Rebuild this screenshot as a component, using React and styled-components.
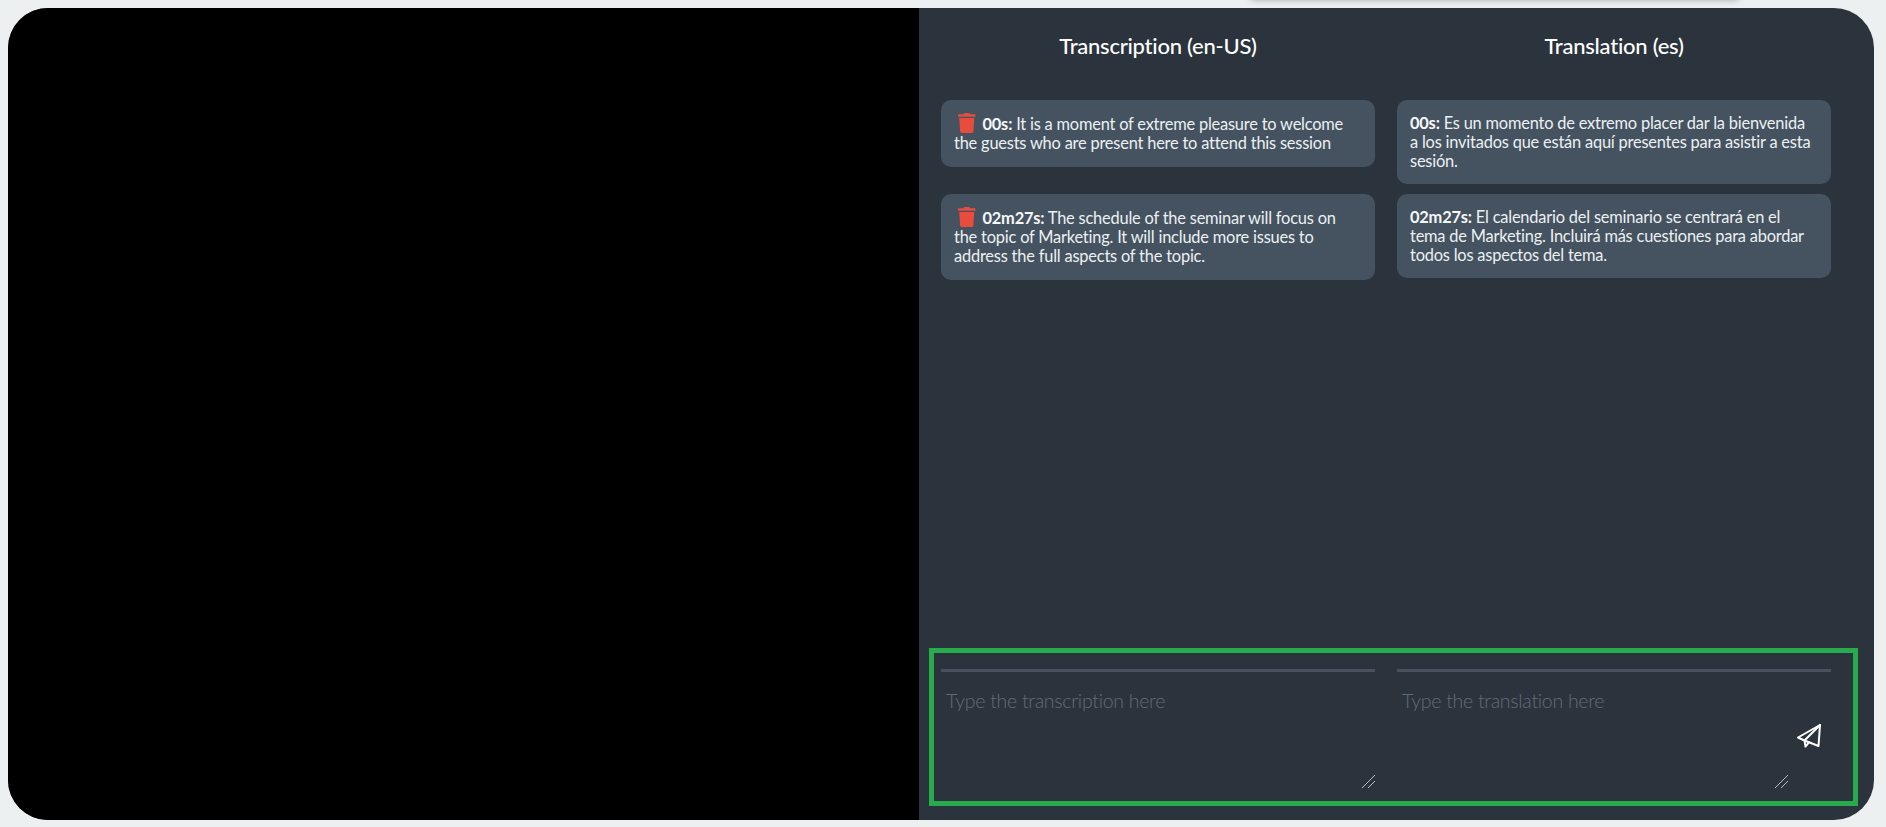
import React from 'react';
import styled, { createGlobalStyle } from 'styled-components';
import { FaTrash } from 'react-icons/fa';

const GlobalStyle = createGlobalStyle`
  html, body {
    margin: 0;
    height: 100%;
    background: #ecf0f1;
    font-family: "Lato", "Open Sans", sans-serif;
    overflow: hidden;
  }
`;

const Page = styled.div`
  position: relative;
  height: 827px;
  padding: 8px 12px 7px 8px;
  box-sizing: border-box;
`;

const TopShadow = styled.div`
  position: absolute;
  top: -10px;
  left: 1250px;
  width: 490px;
  height: 10px;
  border-radius: 6px;
  box-shadow: 0 0 6px rgba(0, 0, 0, 0.3);
`;

const Shell = styled.div`
  display: flex;
  height: 812px;
  border-radius: 40px;
  overflow: hidden;
  background: #2b343d;
`;

const VideoPane = styled.div`
  width: 911px;
  flex: none;
  background: #000;
`;

const SidePane = styled.div`
  flex: 1;
  display: flex;
  flex-direction: column;
  padding: 0 16px 14px 10px;
  min-width: 0;
`;

const Columns = styled.div`
  display: grid;
  grid-template-columns: 434px 434px;
  column-gap: 22px;
  padding-left: ${(p) => p.$inset}px;
`;

const Title = styled.h2`
  margin: 0;
  height: 92px;
  padding-top: 23px;
  box-sizing: border-box;
  font-size: 22px;
  line-height: 30px;
  font-weight: 500;
  letter-spacing: -0.25px;
  text-align: center;
  color: #fff;
`;

const Messages = styled.div`
  flex: 1;
`;

const Cards = styled.div`
  display: flex;
  flex-direction: column;
`;

const Card = styled.div`
  box-sizing: border-box;
  height: ${(p) => p.$height}px;
  margin-bottom: ${(p) => p.$gap}px;
  padding: 13px 17px 0 13px;
  border-radius: 10px;
  background: #455361;
  color: #ecf0f1;
  font-size: 16.4px;
  line-height: 19px;
  letter-spacing: -0.2px;
`;

const Stamp = styled.strong`
  font-weight: 700;
  color: #f5f7f8;
`;

const TrashIcon = styled(FaTrash)`
  width: 17.5px;
  height: 20px;
  margin: 0 7px 0 4px;
  vertical-align: -3px;
  color: #e74c3c;
`;

const Composer = styled.div`
  box-sizing: border-box;
  height: 158px;
  border: 5px solid #27ab4d;
  padding-top: 16px;
  padding-left: 7px;
`;

const InputCell = styled.div`
  display: flex;
  align-items: flex-start;
  height: 119px;
  border-top: 3px solid #48525e;
`;

const Input = styled.textarea`
  flex: 1;
  min-width: 0;
  height: 116px;
  box-sizing: border-box;
  padding: 16px 5px 0;
  border: 0;
  outline: 0;
  background: transparent;
  color: #ecf0f1;
  font-family: inherit;
  font-size: 19.5px;
  line-height: 26px;
  letter-spacing: -0.28px;
  font-weight: 300;
  resize: vertical;

  &::placeholder {
    color: #636c76;
    opacity: 1;
  }

  &::-webkit-resizer {
    background:
      linear-gradient(135deg, transparent 55%, #b9bec3 55%, #b9bec3 58.5%, transparent 58.5%) 0 0 / 15px 15px no-repeat,
      linear-gradient(135deg, transparent 75%, #b9bec3 75%, #b9bec3 78.5%, transparent 78.5%) 0 0 / 15px 15px no-repeat;
  }
`;

const SendButton = styled.button`
  flex: none;
  width: 43px;
  margin-top: 52px;
  padding: 0 0 0 9px;
  border: 0;
  background: transparent;
  display: flex;
  justify-content: flex-start;
`;

const PlaneIcon = () => (
  <svg width="24" height="24" viewBox="0 0 24 24" fill="none" stroke="#fff" strokeWidth="2" strokeLinejoin="round" strokeLinecap="round">
    <path d="M23 1 1 13.5l6.5 3 14 5.5L23 1Z" />
    <path d="M23 1 7.5 16.5l1 6 3.5-4.2" />
  </svg>
);

const transcription = [
  { time: '00s', text: 'It is a moment of extreme pleasure to welcome the guests who are present here to attend this session', height: 67, gap: 27 },
  { time: '02m27s', text: 'The schedule of the seminar will focus on the topic of Marketing. It will include more issues to address the full aspects of the topic.', height: 86, gap: 0 },
];

const translation = [
  { time: '00s', text: 'Es un momento de extremo placer dar la bienvenida a los invitados que están aquí presentes para asistir a esta sesión.', height: 84, gap: 10 },
  { time: '02m27s', text: 'El calendario del seminario se centrará en el tema de Marketing. Incluirá más cuestiones para abordar todos los aspectos del tema.', height: 84, gap: 0 },
];

export default function App() {
  return (
    <>
      <GlobalStyle />
      <Page>
        <TopShadow />
        <Shell>
          <VideoPane />
          <SidePane>
            <Messages>
              <Columns $inset={12}>
                <Title>Transcription (en-US)</Title>
                <Title>Translation (es)</Title>
                <Cards>
                  {transcription.map((m) => (
                    <Card key={m.time} $height={m.height} $gap={m.gap}>
                      <TrashIcon />
                      <Stamp>{m.time}:</Stamp> {m.text}
                    </Card>
                  ))}
                </Cards>
                <Cards>
                  {translation.map((m) => (
                    <Card key={m.time} $height={m.height} $gap={m.gap}>
                      <Stamp>{m.time}:</Stamp> {m.text}
                    </Card>
                  ))}
                </Cards>
              </Columns>
            </Messages>
            <Composer>
              <Columns $inset={0}>
                <InputCell>
                  <Input placeholder="Type the transcription here" />
                </InputCell>
                <InputCell>
                  <Input placeholder="Type the translation here" />
                  <SendButton>
                    <PlaneIcon />
                  </SendButton>
                </InputCell>
              </Columns>
            </Composer>
          </SidePane>
        </Shell>
      </Page>
    </>
  );
}
